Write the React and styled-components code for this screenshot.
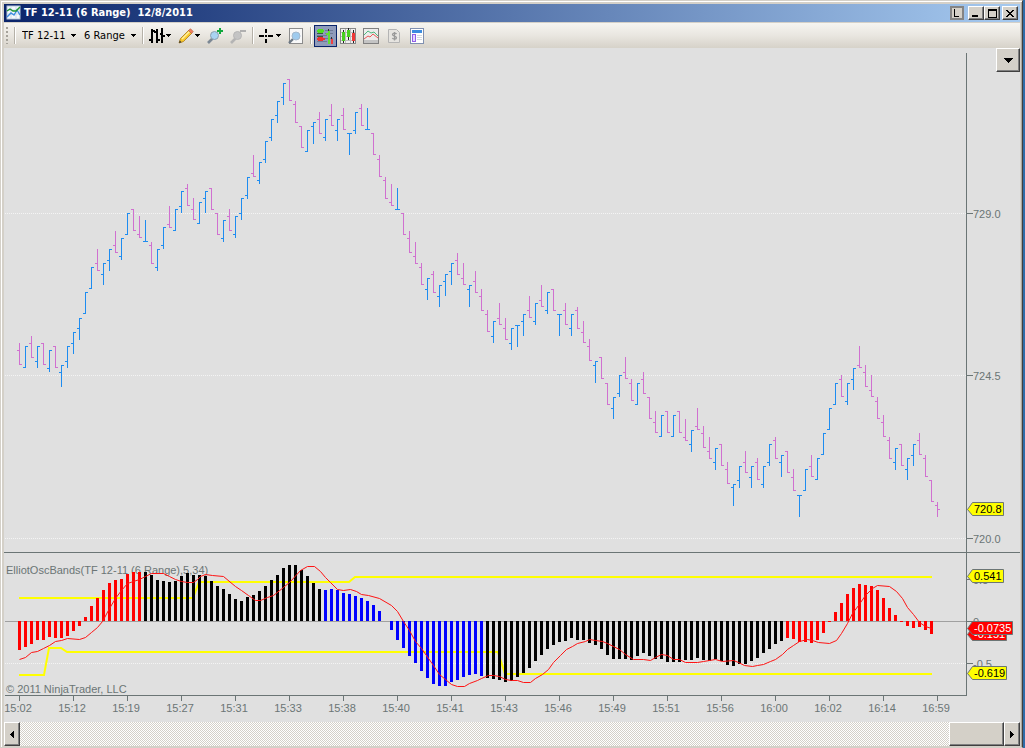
import React from "react";
import styled, { createGlobalStyle } from "styled-components";

const GlobalStyle = createGlobalStyle`
  * { box-sizing: border-box; }
  body { margin: 0; background: #d4d0c8; font-family: "DejaVu Sans Condensed", "DejaVu Sans", sans-serif; font-size: 11px; }
  button, select { font: inherit; color: #000; border-radius: 0; margin: 0; }
`;

/* ---------- window chrome ---------- */

const Desktop = styled.div`
  display: flex;
  min-height: 100vh;
  background: #2f6ca8;
  padding-right: 2px;
`;

const WindowFrame = styled.main`
  flex: 1;
  min-width: 0;
  display: flex;
  flex-direction: column;
  padding: 3px 2px 1px 3px;
  background: #d4d0c8;
  border: 1px solid #d4d0c8;
  border-right-color: #404040;
  box-shadow: inset 1px 1px 0 #fff, inset -1px 0 0 #aaa69e;
`;

const TitleBar = styled.header`
  display: flex;
  align-items: center;
  height: 19px;
  padding: 0 2px 0 2px;
  gap: 2px;
  background: linear-gradient(90deg, #0a246a, #a6caf0);
  border-bottom: 1px solid #d4d0c8;
`;

const Title = styled.h1`
  flex: 1;
  margin: 0;
  color: #fff;
  font-size: 11px;
  font-weight: 700;
  line-height: 16px;
  white-space: pre;
`;

const CaptionButton = styled.button`
  width: 16px;
  height: 14px;
  padding: 0;
  display: grid;
  place-items: center;
  background: #d4d0c8;
  border: 1px solid;
  border-color: #fff #404040 #404040 #fff;
  box-shadow: inset -1px -1px 0 #808080;
`;

const LinkButton = styled(CaptionButton)`
  width: 14px;
  border: 2px solid #848484;
  box-shadow: none;
  margin-right: 2px;
`;

const CaptionPair = styled.div`
  display: flex;
`;

/* ---------- toolbar ---------- */

const Toolbar = styled.div`
  display: flex;
  align-items: center;
  height: 25px;
  background: linear-gradient(#f6f5f1, #e9e6e0 50%, #d6d2c9);
`;

const Grip = styled.span`
  width: 2px;
  height: 17px;
  margin: 0 4px 0 2px;
  background: repeating-linear-gradient(#a5a29a 0 2px, transparent 2px 4px);
`;

const Separator = styled.span`
  width: 2px;
  height: 17px;
  margin: 0 2px;
  background: #b5b1a8;
  border-right: 1px solid #fff;
`;

const PickerBox = styled.label`
  position: relative;
  display: flex;
  align-items: center;
  width: ${(p) => p.$width}px;
  height: 22px;
`;

const PickerSelect = styled.select`
  appearance: none;
  width: 100%;
  height: 22px;
  padding: 0 12px 0 4px;
  border: 0;
  background: transparent;
`;

const PickerArrow = styled.span`
  position: absolute;
  right: 4px;
  display: flex;
  pointer-events: none;
`;

const ToolButton = styled.button`
  display: flex;
  align-items: center;
  gap: 1px;
  width: ${(p) => (p.$menu ? 29 : 23)}px;
  height: 22px;
  padding: 0 2px;
  border: 1px solid ${(p) => (p.$active ? "#0a246a" : "transparent")};
  background: ${(p) => (p.$active ? "#8f9bbb" : "transparent")};
  & > svg { flex: none; }
`;

/* ---------- chart ---------- */

const ChartPane = styled.section`
  position: relative;
  background: #e0e0e0;
`;

const ChartSvg = styled.svg`
  display: block;
  width: 100%;
  height: auto;
`;

const PaneMenuButton = styled.button`
  position: absolute;
  top: 0;
  right: 0;
  width: 24px;
  height: 24px;
  padding: 0;
  display: grid;
  place-items: center;
  background: #d4d0c8;
  border: 1px solid;
  border-color: #fff #404040 #404040 #fff;
  box-shadow: inset -1px -1px 0 #808080;
`;

const AxisText = styled.text`
  font-family: "Liberation Sans", Arial, sans-serif;
  font-size: 11px;
  fill: #6b7575;
  text-anchor: ${(p) => p.$anchor || "start"};
`;

const TagText = styled(AxisText)`
  fill: ${(p) => p.$ink};
`;

/* ---------- scroll bar ---------- */

const ScrollBar = styled.div`
  display: flex;
  height: 24px;
  background: repeating-conic-gradient(#fff 0 25%, #d4d0c8 0 50%) 0 0 / 2px 2px;
`;

const ScrollButton = styled.button`
  width: 16px;
  height: 24px;
  padding: 0;
  display: grid;
  place-items: center;
  background: #d4d0c8;
  border: 1px solid;
  border-color: #fff #404040 #404040 #fff;
  box-shadow: inset -1px -1px 0 #808080;
`;

const ScrollTrack = styled.div`
  flex: 1;
  display: flex;
  justify-content: flex-end;
`;

const ScrollThumb = styled(ScrollButton)`
  width: 55px;
`;

/* ---------- data ---------- */

const FIRST_X = 19;
const STEP = 6;
const RANGE = 22;

/* One entry per bar: u = up, d = down, b = up bar closing on its low; then high/open. */
const RANGE_BARS = `
d343/350 u346/368 d336/343 u346/361 d343/343 u350/368 d346/346 u365/372 u346/361 u332/343
u318/328 u292/314 u267/289 d249/263 u263/274 u249/260 d231/245 u238/256 u213/234 d209/209
d216/234 b220/242 d242/245 u249/267 u227/245 d206/224 u209/231 u191/206 d184/188 d198/209
u202/224 u191/198 d188/188 d213/213 u220/238 d209/216 u216/234 u198/213 u177/195 d155/173
u162/180 u141/159 u119/137 u101/115 u83/97 d79/79 d101/104 d126/126 u130/151 u122/126
d112/119 u119/137 d104/115 u119/130 d108/115 u133/133 u112/130 d104/108 b108/130 d133/133
d155/159 d177/180 d184/202 b188/209 d213/213 d231/238 d242/256 d263/267 u278/289 d271/274
u285/296 u274/281 u263/271 d253/260 d263/278 u285/289 d271/281 d289/296 d310/314 u321/336
d303/318 d318/328 u328/343 u325/325 u314/321 d296/310 u303/321 d285/300 u292/310 d289/289
u314/314 d303/310 u314/328 d307/310 d321/332 d339/346 u361/365 d357/357 d383/383 u397/408
u375/393 d357/372 d379/383 u383/404 d372/379 d397/397 d411/422 u415/437 d411/411 u415/437
d411/411 d419/437 u430/444 d408/426 d426/433 d437/451 u448/462 d444/444 d462/469 u484/487
u466/480 d451/462 u466/477 d458/462 u466/484 u444/462 d437/440 u455/462 d451/451 d469/477
u495/495 u469/491 d455/466 u458/480 u433/455 u408/430 u383/404 d375/379 u383/401 u368/379
d346/365 d365/372 d375/390 d397/401 d415/422 d437/440 u448/462 d444/444 u458/469 u444/455
d433/440 d455/458 d480/480`
  .trim()
  .split(/\s+/)
  .map((s) => {
    const [high, open] = s.slice(1).split("/").map(Number);
    return { kind: s[0], high, open };
  });

const OSCILLATOR = [
  650, 647, 644, 640, 640, 637, 638, 638, 636, 631, 626, 617, 606, 598, 590, 583, 580, 579, 574, 572,
  572, 572, 575, 580, 581, 582, 581, 576, 573, 575, 575, 576, 581, 586, 589, 594, 599, 601, 597, 595,
  591, 586, 580, 575, 568, 565, 565, 570, 576, 583, 589, 590, 589, 590, 593, 594, 596, 598, 601, 605,
  611, 621, 630, 640, 648, 656, 663, 671, 678, 684, 686, 686, 682, 680, 677, 675, 674, 676, 678, 679,
  680, 682, 681, 677, 673, 668, 661, 655, 649, 645, 642, 641, 638, 640, 640, 643, 645, 649, 655, 659,
  659, 659, 660, 656, 653, 656, 659, 659, 662, 662, 662, 660, 660, 658, 660, 661, 659, 661, 665, 666,
  664, 664, 661, 658, 653, 649, 644, 641, 638, 639, 642, 642, 643, 640, 633, 622, 612, 603, 594, 588,
  584, 585, 586, 590, 598, 608, 615, 622, 626, 628, 627, 630, 634,
];

const oscColor = (i) => {
  if (i < 21 || i > 127) return "#ff0000";
  return i > 50 && i < 78 ? "#0000ff" : "#000000";
};

const SIGNAL =
  "19,659 25,657 31,652 37,651 43,648 49,645 55,641 61,640 67,638 79,639 85,637 91,632 97,627 102,621 " +
  "109,608 115,598 121,590 127,583 133,581 139,579 145,576 151,573 163,573 169,576 175,579 181,581 187,582 " +
  "193,582 197,579 200,576 205,574 212,575 223,576 235,586 241,590 248,595 255,600 260,600 267,597 273,595 " +
  "283,587 290,581 300,570 307,566 314,566 320,571 325,577 330,582 337,589 343,590 350,589 356,591 361,594 " +
  "368,595 379,598 391,605 397,611 403,621 409,630 415,641 421,648 433,665 439,674 445,679 451,684 457,686 " +
  "464,686 469,683 477,680 481,678 488,675 493,675 499,676 505,679 511,680 517,680 523,682 530,682 535,678 " +
  "542,674 548,669 553,662 560,655 566,649 572,646 577,643 585,641 589,639 595,640 602,641 607,643 613,646 " +
  "619,649 625,654 633,659 643,659 650,660 655,657 661,654 667,655 673,659 679,659 685,662 697,662 703,661 " +
  "715,659 722,661 733,660 738,662 744,665 752,666 757,665 763,664 770,661 775,659 782,654 787,649 793,645 " +
  "799,641 807,639 812,640 818,642 829,643 836,640 841,633 847,623 852,613 858,605 865,595 872,588 877,585 " +
  "889,586 896,591 902,598 907,607 913,614 919,622 925,626 931,628";

const TIMES = [
  "15:02", "15:12", "15:19", "15:27", "15:31", "15:33", "15:38", "15:40", "15:41",
  "15:43", "15:46", "15:49", "15:51", "15:56", "16:00", "16:02", "16:14", "16:59",
];

const PRICES = [
  { y: 213, label: "729.0" },
  { y: 375, label: "724.5" },
  { y: 538, label: "720.0" },
  { y: 579, label: "0.5" },
  { y: 621, label: "0" },
  { y: 663, label: "-0.5" },
];

/* ---------- chart parts ---------- */

function PriceBar({ x, kind, high, open }) {
  const low = high + RANGE;
  const close = kind === "u" ? high : low - 1;
  const fill = kind === "d" ? "#d070d0" : "#1e8cf0";
  return (
    <g fill={fill}>
      <rect x={x} y={high} width="1" height={RANGE} />
      <rect x={x - 2} y={Math.min(open, low - 1)} width="2" height="1" />
      <rect x={x + 1} y={close} width="2" height="1" />
    </g>
  );
}

function Tag({ y, width, fill, ink, children }) {
  const right = 967 + width;
  return (
    <g>
      <path
        d={`M967.5 ${y + 0.5} L972.5 ${y - 6.5} H${right + 0.5} V${y + 6.5} H972.5 Z`}
        fill={fill}
        stroke="#6b7575"
      />
      <TagText x="974" y={y + 4} $ink={ink}>{children}</TagText>
    </g>
  );
}

function Chart() {
  return (
    <ChartSvg viewBox="4 48 1016 674" role="img" aria-label="TF 12-11 range chart">
      <g shapeRendering="crispEdges">
        <g stroke="#f4f4f4" strokeDasharray="1 1">
          {[213, 375, 538, 663].map((y) => (
            <line key={y} x1="5" x2="966" y1={y + 0.5} y2={y + 0.5} />
          ))}
        </g>
        {RANGE_BARS.map((bar, i) => (
          <PriceBar key={i} x={FIRST_X + i * STEP} {...bar} />
        ))}
        <path d="M937.5 502V517M935 505.5H937M938 509.5H940" stroke="#d070d0" />
      </g>

      <AxisText x="6" y="574">ElliotOscBands(TF 12-11 (6 Range),5,34)</AxisText>
      <AxisText x="6" y="693">© 2011 NinjaTrader, LLC</AxisText>

      <g fill="none" stroke="#ffff00" strokeWidth="2">
        <path d="M19 598H193L199 582H349L355 577H932" />
        <path d="M19 675H44L49 648H61L67 652H498L505 674H932" />
      </g>
      <rect x="5" y="621" width="962" height="1" fill="#a0a0a0" shapeRendering="crispEdges" />
      <g shapeRendering="crispEdges">
        {OSCILLATOR.map((y, i) => (
          <rect
            key={i}
            x={FIRST_X + i * STEP - 1}
            y={Math.min(y, 621)}
            width="3"
            height={Math.abs(y - 621)}
            fill={oscColor(i)}
          />
        ))}
      </g>
      <polyline points={SIGNAL} fill="none" stroke="#ff1414" transform="translate(0.5 0.5)" />

      <g fill="#6b7575" shapeRendering="crispEdges">
        <rect x="4" y="552" width="1016" height="1" />
        <rect x="966" y="53" width="1" height="643" />
        <rect x="5" y="695" width="962" height="1" />
        {TIMES.map((t, i) => (
          <rect key={t} x={FIRST_X + i * 54} y="696" width="1" height="5" />
        ))}
        {PRICES.map((p) => (
          <rect key={p.label} x="967" y={p.y} width="6" height="1" />
        ))}
      </g>
      {TIMES.map((t, i) => (
        <AxisText key={t} x={FIRST_X - 1 + i * 54} y="712" $anchor="middle">{t}</AxisText>
      ))}
      {PRICES.map((p) => (
        <AxisText key={p.label} x="973" y={p.y + 5}>{p.label}</AxisText>
      ))}

      <Tag y={509} width={36} fill="#ffff00" ink="#000">720.8</Tag>
      <Tag y={576} width={36} fill="#ffff00" ink="#000">0.541</Tag>
      <Tag y={634} width={39} fill="#ff0000" ink="#fff">-0.151</Tag>
      <Tag y={628} width={45} fill="#ff0000" ink="#fff">-0.0735</Tag>
      <Tag y={673} width={39} fill="#ffff00" ink="#000">-0.619</Tag>
    </ChartSvg>
  );
}

/* ---------- icons ---------- */

const Caret = () => (
  <svg width="5" height="3" viewBox="0 0 5 3" shapeRendering="crispEdges" aria-hidden="true">
    <path d="M0 0H5V1H4V2H3V3H2V2H1V1H0Z" />
  </svg>
);

const Icon = ({ children, crisp }) => (
  <svg width="16" height="16" viewBox="0 0 16 16" fill="none" shapeRendering={crisp ? "crispEdges" : "auto"} aria-hidden="true">
    {children}
  </svg>
);

const AppIcon = () => (
  <Icon>
    <rect x="1" y="1" width="13" height="13" fill="#f4f8fc" stroke="#b8c8dc" />
    <path d="M1 5H14M1 9H14M5 1V14M10 1V14" stroke="#cddcec" />
    <path d="M1 12L5 8L8 10L11 5L14 10" stroke="#3c8ce0" strokeWidth="1.4" />
    <path d="M1 6L4 4L7 6L10 6L14 2" stroke="#1e9632" strokeWidth="1.4" />
  </Icon>
);

const BarStyleIcon = () => (
  <Icon crisp>
    <path d="M2 1H4V15H2ZM0 11H2V13H0ZM4 2H6V4H4ZM7 1H9V15H7ZM5 3H7V5H5ZM9 11H11V13H9ZM12 0H14V15H12ZM11 5H12V7H11ZM14 7H16V9H14Z" fill="#000" />
  </Icon>
);

const PencilIcon = () => (
  <Icon>
    <path d="M1 15L2.5 10.5L11 2L14 5L5.5 13.5Z" fill="#f9c92c" stroke="#a87818" strokeWidth=".8" />
    <path d="M4 11L12 3" stroke="#fff0a0" strokeWidth="1.4" />
    <path d="M10.5 2.5L12.5 .8L15.2 3.5L13.5 5.5Z" fill="#ef8060" stroke="#b85c40" strokeWidth=".7" />
    <path d="M1 15L1.8 12.5L3.5 14.2Z" fill="#333" />
  </Icon>
);

const MagnifierIcon = ({ plus }) => (
  <Icon>
    <path d="M1 15L5.5 10.5" stroke={plus ? "#7c8894" : "#b4b4b4"} strokeWidth="2.6" />
    <circle cx="7.5" cy="7.5" r="4" fill={plus ? "#a9d3f2" : "#c4c4c4"} stroke={plus ? "#8ca0b0" : "#b6b6b6"} />
    {plus ? (
      <path d="M13 0V6M10 3H16" stroke="#0fa83c" strokeWidth="2" />
    ) : (
      <path d="M10 3H16" stroke="#b0b0b0" strokeWidth="2" />
    )}
  </Icon>
);

const CrosshairIcon = () => (
  <Icon crisp>
    <path d="M6 1H8V5H6ZM6 11H8V15H6ZM0 7H5V9H0ZM9 7H14V9H9ZM6 7H8V9H6Z" fill="#000" />
  </Icon>
);

const PageZoomIcon = () => (
  <Icon>
    <rect x="1.5" y=".5" width="13" height="15" fill="#f8f8f8" stroke="#8c8c8c" />
    <path d="M1 15L5 11" stroke="#6c7884" strokeWidth="2.4" />
    <circle cx="8" cy="8" r="4" fill="#9fcbee" stroke="#a4b8cc" />
  </Icon>
);

const TraderIcon = () => (
  <Icon crisp>
    <path d="M8 2.5H16M8 5.5H16M0 7.5H10M8 10.5H16M0 13.5H10" stroke="#6f7a98" />
    <path d="M1 1H6V2H7V4H6V5H1V4H0V2H1Z" fill="#50e020" />
    <path d="M1 9H6V10H8V12H6V13H1V12H0V10H1Z" fill="#f03030" />
    <path d="M0 5H6M0 8.5H6" stroke="#3a5a40" />
    <path d="M9 5H11V3H13V16H11V7H9Z" fill="#60e030" />
    <path d="M11 1H12V3H11ZM14 9H15V11H14Z" fill="#303030" />
    <path d="M13.5 11H16V16H13.5Z" fill="#f04040" />
  </Icon>
);

const CandlesIcon = () => (
  <Icon crisp>
    <rect x=".5" y=".5" width="15" height="15" fill="#f0f0f0" stroke="#888" />
    <path d="M1 4.5H15M1 8.5H15M1 12.5H15M5.5 1V15M10.5 1V15" stroke="#bbb" />
    <path d="M3.5 2V15M8.5 0V12M13.5 2V15" stroke="#222" />
    <path d="M2 4H5V13H2ZM7 2H10V9H7Z" fill="#48d020" />
    <path d="M12 5H15V13H12Z" fill="#f03838" />
  </Icon>
);

const IndicatorIcon = () => (
  <Icon>
    <rect x=".5" y=".5" width="15" height="15" fill="#ececec" stroke="#808080" />
    <path d="M1 12H15V15H1Z" fill="#c4c4c4" />
    <path d="M1 7L5 3L8 5L11 4L15 8" stroke="#50b880" />
    <path d="M1 11L5 8L7 9L10 6L15 10" stroke="#e85858" />
  </Icon>
);

const StrategyIcon = () => (
  <Icon>
    <path d="M2.5 1.5H10.5L13.5 4.5V14.5H2.5Z" fill="#e6e4e0" stroke="#b4b4b4" />
    <path d="M10.5 6C9.5 4.6 6.5 4.8 6.5 6.5C6.5 8.5 10.5 7.5 10.5 9.7C10.5 11.4 7.3 11.6 6.3 10M8.5 4V12.5" stroke="#999" strokeWidth="1.3" />
  </Icon>
);

const PropertiesIcon = () => (
  <Icon crisp>
    <rect x="1.5" y=".5" width="13" height="15" fill="#fff" stroke="#8090b0" />
    <path d="M3 2H13V5H3Z" fill="#3c8ce0" />
    <rect x="3.5" y="6.5" width="3" height="7" fill="#e4d8ff" stroke="#9060e8" />
    <path d="M8 7.5H13M8 9.5H13M8 11.5H13" stroke="#d4dae0" />
  </Icon>
);

function Picker({ label, value, width }) {
  return (
    <PickerBox $width={width}>
      <PickerSelect aria-label={label} defaultValue={value}>
        <option>{value}</option>
      </PickerSelect>
      <PickerArrow><Caret /></PickerArrow>
    </PickerBox>
  );
}

function Tool({ label, menu, active, children }) {
  return (
    <ToolButton type="button" aria-label={label} $menu={menu} $active={active}>
      {children}
      {menu && <Caret />}
    </ToolButton>
  );
}

export default function App() {
  return (
    <Desktop>
      <GlobalStyle />
      <WindowFrame>
        <TitleBar>
          <AppIcon />
          <Title>{"TF 12-11 (6 Range)  12/8/2011"}</Title>
          <LinkButton type="button" aria-label="Link">
            <svg width="6" height="8" shapeRendering="crispEdges"><path d="M0 0H1V7H5V8H0Z" /></svg>
          </LinkButton>
          <CaptionPair>
            <CaptionButton type="button" aria-label="Minimize">
              <svg width="8" height="8" shapeRendering="crispEdges"><path d="M0 6H6V8H0Z" /></svg>
            </CaptionButton>
            <CaptionButton type="button" aria-label="Maximize">
              <svg width="9" height="9" shapeRendering="crispEdges"><path d="M0 0H9V9H0ZM1 2V8H8V2Z" fillRule="evenodd" /></svg>
            </CaptionButton>
          </CaptionPair>
          <CaptionButton type="button" aria-label="Close">
            <svg width="8" height="7" shapeRendering="crispEdges">
              <path d="M0 0H2V1H3V2H5V1H6V0H8V1H7V2H6V3H5V4H6V5H7V6H8V7H6V6H5V5H3V6H2V7H0V6H1V5H2V4H3V3H2V2H1V1H0Z" />
            </svg>
          </CaptionButton>
        </TitleBar>

        <Toolbar>
          <Grip />
          <Separator />
          <Picker label="Instrument" value="TF 12-11" width={62} />
          <Picker label="Interval" value="6 Range" width={60} />
          <Separator />
          <Tool label="Bar style" menu><BarStyleIcon /></Tool>
          <Tool label="Drawing tools" menu><PencilIcon /></Tool>
          <Tool label="Zoom in"><MagnifierIcon plus /></Tool>
          <Tool label="Zoom out"><MagnifierIcon /></Tool>
          <Separator />
          <Tool label="Crosshair" menu><CrosshairIcon /></Tool>
          <Tool label="Zoom frame"><PageZoomIcon /></Tool>
          <Separator />
          <Tool label="Chart trader" active><TraderIcon /></Tool>
          <Tool label="Data series"><CandlesIcon /></Tool>
          <Tool label="Indicators"><IndicatorIcon /></Tool>
          <Tool label="Strategies"><StrategyIcon /></Tool>
          <Tool label="Properties"><PropertiesIcon /></Tool>
        </Toolbar>

        <ChartPane>
          <Chart />
          <PaneMenuButton type="button" aria-label="Panel menu">
            <svg width="9" height="5" shapeRendering="crispEdges"><path d="M0 0H9V1H8V2H7V3H6V4H5V5H4V4H3V3H2V2H1V1H0Z" /></svg>
          </PaneMenuButton>
        </ChartPane>

        <ScrollBar>
          <ScrollButton type="button" aria-label="Scroll left">
            <svg width="4" height="7" shapeRendering="crispEdges"><path d="M4 0V7H3V6H2V5H1V4H0V3H1V2H2V1H3V0Z" /></svg>
          </ScrollButton>
          <ScrollTrack>
            <ScrollThumb type="button" aria-label="Scroll position" />
          </ScrollTrack>
          <ScrollButton type="button" aria-label="Scroll right">
            <svg width="4" height="7" shapeRendering="crispEdges"><path d="M0 0V7H1V6H2V5H3V4H4V3H3V2H2V1H1V0Z" /></svg>
          </ScrollButton>
        </ScrollBar>
      </WindowFrame>
    </Desktop>
  );
}
